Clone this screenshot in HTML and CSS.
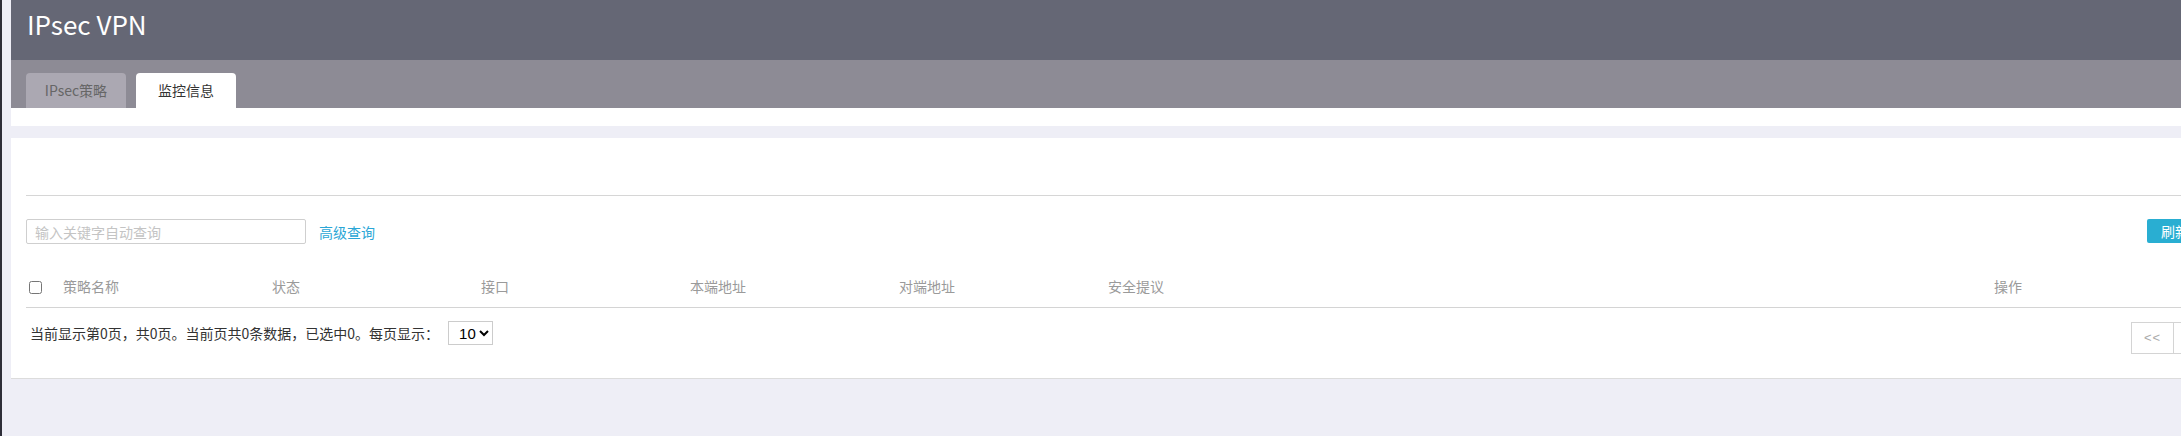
FILE: index.html
```html
<!DOCTYPE html>
<html lang="zh-CN">
<head>
    <meta charset="UTF-8">
    <title>IPsec VPN</title>
    <link rel="stylesheet" href="styles.css">
</head>
<body>
    <div class="page">
        <div class="title-bar">IPsec VPN</div>

        <div class="tab-bar">
            <div class="tab">IPsec策略</div>
            <div class="tab active">监控信息</div>
        </div>
        <div class="tab-strip"></div>

        <div class="panel">
            <div class="panel-top"></div>

            <div class="toolbar">
                <input class="search" type="text" placeholder="输入关键字自动查询">
                <a class="adv-link" href="#">高级查询</a>
                <div class="spacer"></div>
                <button class="btn-refresh">刷新</button>
            </div>

            <table class="grid">
                <colgroup>
                    <col style="width: 37px">
                    <col style="width: 209px">
                    <col style="width: 209px">
                    <col style="width: 209px">
                    <col style="width: 209px">
                    <col style="width: 209px">
                    <col style="width: 886px">
                    <col style="width: 209px">
                </colgroup>
                <thead>
                    <tr>
                        <th><input class="check" type="checkbox"></th>
                        <th>策略名称</th>
                        <th>状态</th>
                        <th>接口</th>
                        <th>本端地址</th>
                        <th>对端地址</th>
                        <th>安全提议</th>
                        <th>操作</th>
                    </tr>
                </thead>
                <tbody></tbody>
            </table>

            <div class="footer">
                <div class="page-info">
                    <span>当前显示第0页，共0页。当前页共0条数据，已选中0。每页显示：</span>
                    <select class="page-size">
                        <option>10</option>
                        <option>20</option>
                        <option>50</option>
                    </select>
                </div>
                <div class="pager">
                    <span class="pager-item first">&lt;&lt;</span>
                    <span class="pager-item">&lt;</span>
                </div>
            </div>
        </div>
    </div>
</body>
</html>
```

FILE: styles.css
```css
html, body {
    height: 100%;
}
body {
    margin: 0;
    overflow: hidden;
    background-color: #eeeef6;
    border-left: 2px solid #2e2e38;
    font-family: "Noto Sans CJK SC", "Liberation Sans", sans-serif;
    font-size: 14px;
    color: #333;
}
.page {
    margin-left: 9px;
    width: 2207px;
}
.title-bar {
    height: 60px;
    line-height: 47px;
    padding-left: 16px;
    background-color: #656775;
    color: #fff;
    font-size: 26px;
    box-sizing: border-box;
}
.tab-bar {
    display: flex;
    gap: 10px;
    height: 48px;
    padding: 13px 0 0 15px;
    box-sizing: border-box;
    background-color: #8d8b95;
}
.tab {
    width: 100px;
    height: 35px;
    line-height: 35px;
    text-align: center;
    border-radius: 4px 4px 0 0;
    background-color: #aba8b2;
    color: #666;
}
.tab.active {
    background-color: #fff;
    color: #333;
}
.tab-strip {
    height: 18px;
    background-color: #fff;
    margin-bottom: 12px;
}
.panel {
    background-color: #fff;
    padding: 0 15px;
    border-bottom: 1px solid #dcdcdc;
}
.panel-top {
    height: 57px;
    border-bottom: 1px solid #d6d6d6;
}
.toolbar {
    display: flex;
    align-items: center;
    padding-top: 23px;
    height: 25px;
}
.search {
    width: 280px;
    height: 25px;
    box-sizing: border-box;
    border: 1px solid #cfcfcf;
    border-radius: 2px;
    padding: 0 8px;
    font-family: inherit;
    font-size: 14px;
    color: #333;
    outline: none;
}
.search::placeholder {
    color: #c4c4c4;
}
.adv-link {
    margin-left: 13px;
    color: #2aa6d6;
    text-decoration: none;
}
.spacer {
    flex-grow: 1;
}
.btn-refresh {
    width: 56px;
    height: 24px;
    margin-top: -2px;
    border: none;
    border-radius: 2px;
    background-color: #29aed2;
    color: #fff;
    font-family: inherit;
    font-size: 14px;
    padding: 0;
}
.grid {
    width: 2177px;
    table-layout: fixed;
    border-collapse: collapse;
    margin-top: 21px;
}
.grid th {
    height: 42px;
    padding: 0;
    text-align: left;
    font-weight: normal;
    color: #9a9a9a;
    border-bottom: 1px solid #d4d4d4;
    vertical-align: middle;
}
.check {
    width: 13px;
    height: 13px;
    margin: 0 0 2px 3px;
    vertical-align: middle;
}
.footer {
    display: flex;
    justify-content: space-between;
    align-items: flex-start;
    padding: 14px 0 24px;
}
.page-info {
    display: flex;
    align-items: center;
    height: 24px;
    padding-left: 4px;
    margin-top: -1px;
}
.page-size {
    width: 45px;
    height: 24px;
    margin-left: 9px;
    border: 1px solid #ccc;
    background-color: #fff;
    font-family: "Liberation Sans", sans-serif;
    font-size: 15px;
    color: #000;
    padding: 0 0 0 6px;
}
.pager {
    display: flex;
}
.pager-item {
    height: 32px;
    line-height: 30px;
    box-sizing: border-box;
    border: 1px solid #d4d4d4;
    border-left: none;
    width: 29px;
    text-align: center;
    color: #aaa;
    font-family: "Liberation Sans", sans-serif;
    font-size: 13px;
}
.pager-item.first {
    width: 43px;
    border-left: 1px solid #d4d4d4;
    letter-spacing: 1px;
}
```
